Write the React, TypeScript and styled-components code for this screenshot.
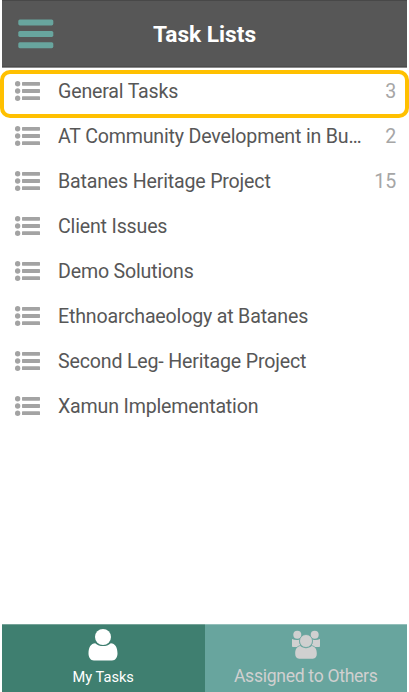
import React from "react";
import styled, { createGlobalStyle } from "styled-components";

const GlobalStyle = createGlobalStyle`
  * { box-sizing: border-box; }
  body { margin: 0; background: #fff; font-family: Roboto, "Liberation Sans", sans-serif; }
`;

const Screen = styled.div`
  display: flex;
  flex-direction: column;
  width: 409px;
  height: 692px;
  padding: 0 2px;
  background: #fff;
  overflow: hidden;
`;

const Header = styled.header`
  display: grid;
  grid-template-columns: 67px 1fr 67px;
  align-items: center;
  height: 68px;
  flex: none;
  background: #575757;
  border-top: 1px solid #484848;
  border-bottom: 1px solid #8a8a8a;
  box-shadow: inset 0 -1px #4c4c4c;
`;

const MenuButton = styled.button`
  display: flex;
  padding: 0 0 0 16px;
  border: 0;
  background: none;
`;

const Title = styled.h1`
  margin: 1px 0 0;
  text-align: center;
  font-size: 22.7px;
  line-height: 28px;
  font-weight: 700;
  color: #fff;
  white-space: nowrap;
`;

const List = styled.ul`
  flex: 1;
  margin: 0;
  padding: 0;
  list-style: none;
`;

const Row = styled.li`
  position: relative;
  display: flex;
  align-items: center;
  height: 45px;
  padding: 0 11px 0 13px;
`;

const Highlight = styled.span`
  position: absolute;
  left: -2px;
  right: -2px;
  top: 2px;
  height: 48px;
  border: 4px solid #ffc000;
  border-radius: 10px;
`;

const Name = styled.span`
  flex: 1;
  margin-left: 17px;
  padding-top: 2px;
  font-size: 19.6px;
  letter-spacing: -0.18px;
  line-height: 26px;
  color: #575757;
  white-space: nowrap;
`;

const Count = styled.span`
  padding-top: 2px;
  font-size: 19.6px;
  letter-spacing: -0.18px;
  line-height: 26px;
  color: #a6a6a6;
`;

const TabBar = styled.nav`
  display: grid;
  grid-template-columns: 202.5px 1fr;
  height: 68px;
  flex: none;
`;

const Tab = styled.button<{ $active?: boolean }>`
  display: flex;
  flex-direction: column;
  align-items: center;
  padding: 0;
  border: 0;
  border-top: 1px solid ${(p) => (p.$active ? "#75a398" : "#93bfba")};
  background: ${(p) => (p.$active ? "#3f7f70" : "#68a59e")};
  color: ${(p) => (p.$active ? "#fff" : "#d0d0d0")};
  font-family: inherit;
`;

const TabLabel = styled.span<{ $size: number; $top: number; $spacing: number }>`
  margin-top: ${(p) => p.$top}px;
  font-size: ${(p) => p.$size}px;
  letter-spacing: ${(p) => p.$spacing}px;
  line-height: 20px;
  white-space: nowrap;
`;

const MenuIcon = () => (
  <svg width="36" height="30" viewBox="0 0 36 30" fill="#68a59e">
    <rect x="0.3" y="0.4" width="35" height="6" rx="1.6" />
    <rect x="0.3" y="11.9" width="35" height="6" rx="1.6" />
    <rect x="0.3" y="23.2" width="35" height="6" rx="1.6" />
  </svg>
);

const ListIcon = () => (
  <svg width="26" height="20" viewBox="0 0 26 20" fill="#a3a3a3">
    {[2.8, 10, 17.2].map((y) => (
      <g key={y}>
        <circle cx="2.6" cy={y} r="2.7" />
        <rect x="7" y={y - 1.9} width="18" height="3.8" rx="0.6" />
      </g>
    ))}
  </svg>
);

const PersonIcon = () => (
  <svg width="30" height="36" viewBox="0 0 30 36" fill="#fff">
    <path d="M7.2 18.2C3 18.6.5 22 .5 28.500C.5 32 2.300 35.500 6 35.500H24C27.700 35.500 29.500 32 29.500 28.500C29.500 22 27 18.600 22.800 18.200C18.500 22 11.500 22 7.200 18.200Z" />
    <circle cx="15" cy="12" r="8" />
  </svg>
);

const GroupIcon = () => (
  <svg width="30" height="36" viewBox="0 0 30 36" fill="#d0d0d0">
    <circle cx="6.300" cy="9.800" r="4" />
    <circle cx="23.700" cy="9.800" r="4" />
    <path d="M1 14C3.500 15.200 6.500 15.500 8.400 14.400C8 17.500 8.700 19 9.600 20.300C8 20.500 7 21 6 21.900H1.800Q1 21.900 1 21Z" />
    <path d="M29 14C26.500 15.200 23.500 15.500 21.600 14.400C22 17.500 21.300 19 20.400 20.300C22 20.500 23 21 24 21.900H28.200Q29 21.900 29 21Z" />
    <circle cx="15" cy="16" r="6.500" stroke="#68a59e" strokeWidth="0.800" />
    <path d="M9.400 21.100C6 21.500 4.200 24.200 4.200 28.800C4.200 31.500 5.500 33.800 8.200 33.800H21.800C24.500 33.800 25.800 31.500 25.800 28.800C25.800 24.200 24 21.500 20.600 21.100C17.500 23.800 12.500 23.800 9.400 21.100Z" />
  </svg>
);

const tasks: { name: string; count?: number; selected?: boolean }[] = [
  { name: "General Tasks", count: 3, selected: true },
  { name: "AT Community Development in Bu…", count: 2 },
  { name: "Batanes Heritage Project", count: 15 },
  { name: "Client Issues" },
  { name: "Demo Solutions" },
  { name: "Ethnoarchaeology at Batanes" },
  { name: "Second Leg- Heritage Project" },
  { name: "Xamun Implementation" },
];

export default function App() {
  return (
    <Screen>
      <GlobalStyle />
      <Header>
        <MenuButton aria-label="Menu">
          <MenuIcon />
        </MenuButton>
        <Title>Task Lists</Title>
      </Header>
      <List>
        {tasks.map((task) => (
          <Row key={task.name}>
            <ListIcon />
            <Name>{task.name}</Name>
            {task.count !== undefined && <Count>{task.count}</Count>}
            {task.selected && <Highlight />}
          </Row>
        ))}
      </List>
      <TabBar>
        <Tab $active>
          <PersonIcon />
          <TabLabel $size={14.6} $top={6} $spacing={0}>My Tasks</TabLabel>
        </Tab>
        <Tab>
          <GroupIcon />
          <TabLabel $size={17.6} $top={5} $spacing={-0.3}>Assigned to Others</TabLabel>
        </Tab>
      </TabBar>
    </Screen>
  );
}
